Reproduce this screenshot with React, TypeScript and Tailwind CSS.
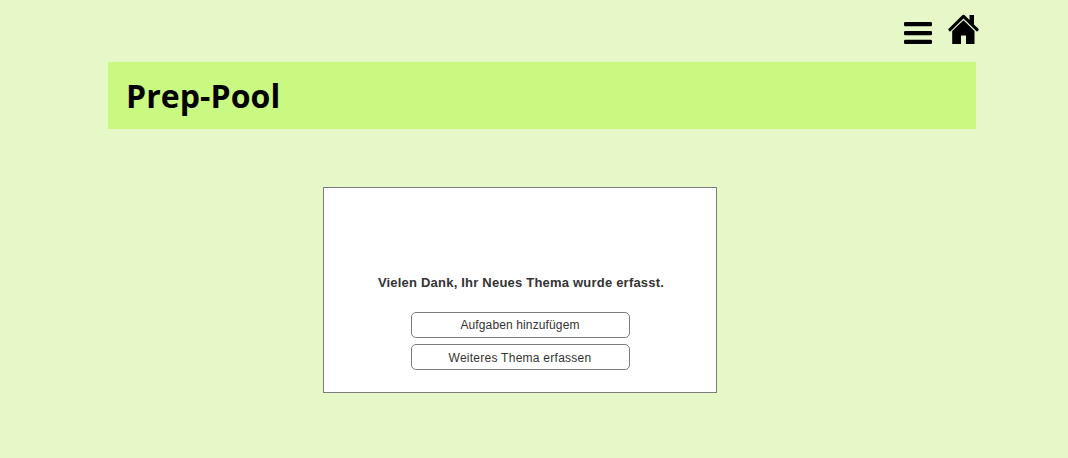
export default function App() {
  return (
    <div className="flex h-[458px] w-[1068px] flex-col bg-[#e6f8c8] pl-[108px] text-black">
      <header className="flex h-[62px] w-[871px] items-start justify-end gap-4">
        <svg className="mt-[22px] h-[22px] w-7" viewBox="0 0 28 22" aria-label="Menu">
          <rect width="28" height="4.3" rx="1.3" />
          <rect y="8.9" width="28" height="4.3" rx="1.3" />
          <rect y="17.7" width="28" height="4.3" rx="1.3" />
        </svg>
        <svg className="mt-[14px] h-[31px] w-[31px]" viewBox="0 0 31 31" aria-label="Home">
          <path d="M14 1.5Q15.5.2 17 1.5L21.5 6V1H26V10.5L30.6 15Q31 15.5 30.6 16L29.5 17.2Q29 17.6 28.5 17.2L15.5 4.6 2.5 17.2Q2 17.6 1.5 17.2L.4 16Q0 15.5.4 15z" />
          <path d="M15.5 6.3 4.2 17V29.5Q4.2 30 4.7 30H13V21.5H18V30H26Q26.5 30 26.5 29.5V17z" />
        </svg>
      </header>
      <div className="flex h-[67px] w-[868px] items-center bg-[#caf981] pl-[18px]">
        <h1 className="font-['Open_Sans',sans-serif] text-[32px] leading-none font-bold tracking-[0.08px]">Prep-Pool</h1>
      </div>
      <main className="mt-[58px] ml-[215px] flex h-[206px] w-[394px] flex-col items-center border border-[#7c7c7c] bg-white pt-[87px] font-['Liberation_Sans',sans-serif] text-[#333]">
        <p className="pl-0.5 text-[13px] leading-4 font-bold tracking-[0.21px] whitespace-nowrap">Vielen Dank, Ihr Neues Thema wurde erfasst.</p>
        <div className="mt-[21px] flex w-[219px] flex-col gap-1.5 text-xs">
          <button className="h-[26px] rounded-[5px] border border-[#7c7c7c] tracking-[0.13px]">Aufgaben hinzufügem</button>
          <button className="h-[26px] rounded-[5px] border border-[#7c7c7c] pt-px tracking-[0.26px]">Weiteres Thema erfassen</button>
        </div>
      </main>
    </div>
  );
}
